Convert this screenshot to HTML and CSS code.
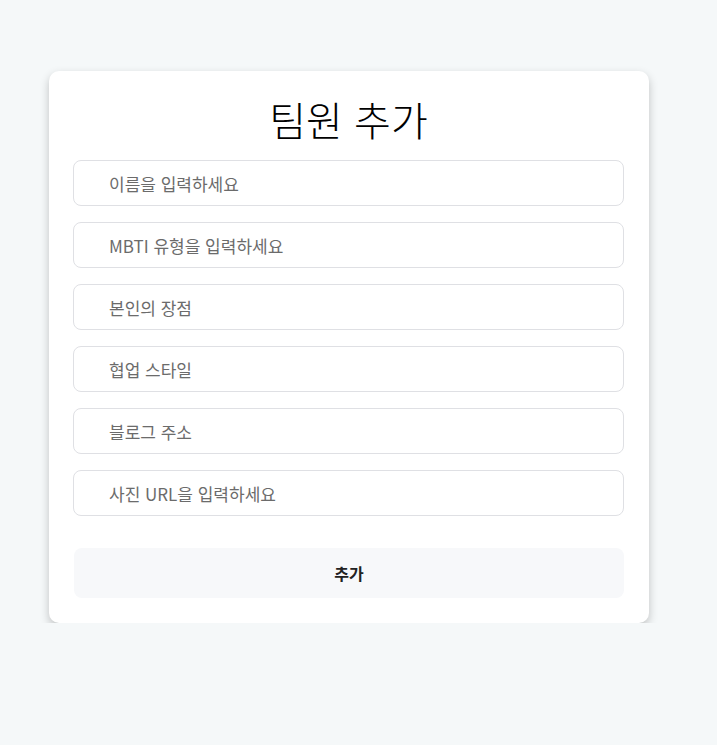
FILE: index.html
```html
<!DOCTYPE html>
<html lang="ko">
<head>
<meta charset="utf-8">
<link rel="stylesheet" href="styles.css">
</head>
<body>
<div class="card">
  <h1 class="title">팀원 추가</h1>
  <form class="form">
    <input class="field" type="text" placeholder="이름을 입력하세요">
    <input class="field" type="text" placeholder="MBTI 유형을 입력하세요">
    <input class="field" type="text" placeholder="본인의 장점">
    <input class="field" type="text" placeholder="협업 스타일">
    <input class="field" type="text" placeholder="블로그 주소">
    <input class="field" type="text" placeholder="사진 URL을 입력하세요">
    <button class="submit" type="button">추가</button>
  </form>
</div>
</body>
</html>
```
FILE: styles.css
```css
html, body {
  margin: 0;
  padding: 0;
  background: #f5f8f9;
  font-family: "Noto Sans CJK KR", "Noto Sans", sans-serif;
}
body {
  padding: 71px 0 0 49px;
}
.card {
  width: 600px;
  box-sizing: border-box;
  background: #ffffff;
  border-radius: 10px;
  box-shadow: 0 4px 10px rgba(0, 0, 0, 0.22);
  padding: 24px 25px 25px 24px;
}
.title {
  margin: 0 0 17px;
  font-size: 40px;
  font-weight: 300;
  line-height: 48px;
  text-align: center;
  color: #000;
}
.form {
  display: flex;
  flex-direction: column;
  gap: 16px;
}
.field {
  height: 46px;
  box-sizing: border-box;
  border: 1px solid #dfe0e4;
  border-radius: 8px;
  padding: 0 0 0 35px;
  font-family: inherit;
  font-size: 17px;
  font-weight: 400;
  color: #333;
  background: #fff;
  outline: none;
}
.field::placeholder {
  color: #6b6b6b;
}
.submit {
  margin-top: 16px;
  height: 50px;
  margin-left: 1px;
  border: none;
  border-radius: 8px;
  background: #f7f8fa;
  font-family: inherit;
  font-size: 16px;
  font-weight: 700;
  color: #222;
}
```
